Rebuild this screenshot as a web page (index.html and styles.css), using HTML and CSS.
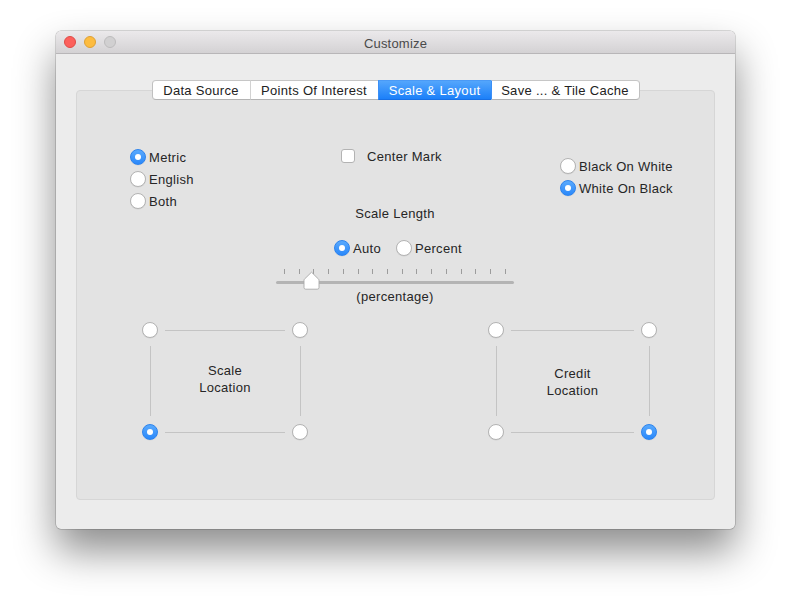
FILE: index.html
```html
<!DOCTYPE html>
<html>
<head>
<meta charset="utf-8">
<link rel="stylesheet" href="styles.css">
</head>
<body>
<div class="window">
  <div class="titlebar">
    <div class="lights">
      <span class="light red"></span>
      <span class="light yellow"></span>
      <span class="light gray"></span>
    </div>
    <div class="title">Customize</div>
  </div>
  <div class="content">
    <div class="tabs">
      <div class="tab t1">Data Source</div>
      <div class="tab t2">Points Of Interest</div>
      <div class="tab t3 active">Scale &amp; Layout</div>
      <div class="tab t4">Save ... &amp; Tile Cache</div>
    </div>
    <div class="panel">
      <div class="top">
        <div class="col1">
          <div class="opt"><span class="radio on"></span>Metric</div>
          <div class="opt"><span class="radio"></span>English</div>
          <div class="opt"><span class="radio"></span>Both</div>
        </div>
        <div class="col2">
          <div class="check-row"><span class="checkbox"></span>Center Mark</div>
          <div class="label scale-length">Scale Length</div>
          <div class="mode-row">
            <div class="opt"><span class="radio on"></span>Auto</div>
            <div class="opt"><span class="radio"></span>Percent</div>
          </div>
          <div class="slider">
            <div class="ticks">
              <i></i><i></i><i></i><i></i><i></i><i></i><i></i><i></i>
              <i></i><i></i><i></i><i></i><i></i><i></i><i></i><i></i>
            </div>
            <div class="track"></div>
            <svg class="knob" width="17" height="19" viewBox="0 0 17 19">
              <path d="M8.5 1.2 L15.6 8.2 Q16 8.6 16 9.2 L16 16.5 Q16 18.2 14.3 18.2 L2.7 18.2 Q1 18.2 1 16.5 L1 9.2 Q1 8.6 1.4 8.2 Z" fill="#ffffff" stroke="#a9a9a9" stroke-width="0.9"/>
            </svg>
          </div>
          <div class="label pct">(percentage)</div>
        </div>
        <div class="col3">
          <div class="opt"><span class="radio"></span>Black On White</div>
          <div class="opt"><span class="radio on"></span>White On Black</div>
        </div>
      </div>
      <div class="bottom">
        <div class="loc scale-loc">
          <span class="radio"></span>
          <span class="hline"></span>
          <span class="radio"></span>
          <span class="vline"></span>
          <div class="loc-label up">Scale<br>Location</div>
          <span class="vline"></span>
          <span class="radio on"></span>
          <span class="hline"></span>
          <span class="radio"></span>
        </div>
        <div class="loc credit-loc">
          <span class="radio"></span>
          <span class="hline"></span>
          <span class="radio"></span>
          <span class="vline"></span>
          <div class="loc-label down">Credit<br>Location</div>
          <span class="vline"></span>
          <span class="radio"></span>
          <span class="hline"></span>
          <span class="radio on"></span>
        </div>
      </div>
    </div>
  </div>
</div>
</body>
</html>
```

FILE: styles.css
```css
* { box-sizing: border-box; }
html, body { margin: 0; padding: 0; }
body {
  background: #ffffff;
  width: 791px;
  height: 609px;
  padding: 31px 0 0 56px;
  font-family: "Liberation Sans", Arial, sans-serif;
  font-size: 13px;
  letter-spacing: 0.3px;
  color: #262626;
  overflow: hidden;
}
.window {
  width: 679px;
  height: 498px;
  background: #ececec;
  border-radius: 5px;
  overflow: hidden;
  box-shadow: 0 0 0 0.5px rgba(0,0,0,0.28), 0 22px 40px rgba(0,0,0,0.45);
}
.titlebar {
  height: 23px;
  background: linear-gradient(#ebe9eb, #d4d2d4);
  border-bottom: 1px solid #b8b6b8;
  display: flex;
  align-items: center;
  position: relative;
}
.lights {
  display: flex;
  gap: 8px;
  padding-left: 8px;
}
.light {
  width: 12px;
  height: 12px;
  border-radius: 50%;
  display: block;
}
.red { background: #fc605c; border: 0.5px solid #de4b46; }
.yellow { background: #fdbc40; border: 0.5px solid #dea034; }
.gray { background: #d1d0d1; border: 0.5px solid #bcbbbc; }
.title {
  position: absolute;
  left: 0; right: 0; top: 1px;
  line-height: 23px;
  text-align: center;
  color: #4a4a4a;
  font-size: 13px;
  letter-spacing: 0.2px;
}
.content {
  padding: 26px 20px 0 20px;
}
.tabs {
  display: flex;
  justify-content: center;
  position: relative;
  z-index: 2;
  height: 20px;
}
.tab {
  height: 20px;
  line-height: 19px;
  text-align: center;
  background: #ffffff;
  border-top: 1px solid #c6c6c6;
  border-bottom: 1px solid #b4b4b4;
  border-left: 1px solid #d2d2d2;
  color: #222;
  font-size: 13px;
  white-space: nowrap;
}
.t1 { width: 98px; border-left: 1px solid #c0c0c0; border-radius: 4px 0 0 4px; }
.t2 { width: 128px; }
.t3 { width: 113px; }
.t4 { width: 149px; border-right: 1px solid #c0c0c0; border-radius: 0 4px 4px 0; }
.tab.active {
  background: linear-gradient(#54a6fc, #1c80f9);
  color: #ffffff;
  border-top-color: #4a9af6;
  border-bottom-color: #1770e6;
  border-left-color: #3b8ff7;
}
.t4 { border-left-color: #3b8ff7; }
.panel {
  margin-top: -10px;
  height: 410px;
  background: #e3e3e3;
  border: 1px solid #d6d6d6;
  border-radius: 4px;
  padding-top: 55px;
}
.top {
  display: flex;
  align-items: flex-start;
  padding-left: 53px;
}
.col1 { width: 145px; }
.opt {
  display: flex;
  align-items: center;
  height: 22px;
  white-space: nowrap;
}
.radio {
  width: 16px;
  height: 16px;
  border-radius: 50%;
  background: #ffffff;
  border: 1px solid #b3b3b3;
  box-shadow: 0 0.5px 0.5px rgba(0,0,0,0.08);
  display: inline-flex;
  align-items: center;
  justify-content: center;
  flex: none;
  margin-right: 3px;
}
.radio.on {
  background: linear-gradient(#5aaafd, #2a88fa);
  border-color: #2c83ee;
}
.radio.on::after {
  content: "";
  width: 6px;
  height: 6px;
  border-radius: 50%;
  background: #ffffff;
}
.col2 {
  width: 240px;
  display: flex;
  flex-direction: column;
  align-items: center;
}
.check-row {
  display: flex;
  align-items: center;
  height: 20px;
  align-self: flex-start;
  margin-left: 66px;
}
.checkbox {
  width: 14px;
  height: 14px;
  background: #ffffff;
  border: 1px solid #b3b3b3;
  border-radius: 3px;
  margin-right: 12px;
}
.label { height: 16px; line-height: 16px; }
.scale-length { margin-top: 40px; }
.mode-row {
  display: flex;
  gap: 15px;
  margin-top: 15px;
  height: 22px;
  align-items: center;
  align-self: flex-start;
  margin-left: 59px;
}
.slider {
  position: relative;
  width: 238px;
  height: 21px;
  margin-top: 10px;
}
.ticks {
  display: flex;
  justify-content: space-between;
  padding: 0 8px;
  height: 5px;
}
.ticks i {
  display: block;
  width: 1px;
  height: 5px;
  background: #9c9c9c;
}
.track {
  margin-top: 7px;
  height: 3px;
  border-radius: 2px;
  background: #b4b4b4;
}
.knob {
  position: absolute;
  left: 27px;
  top: 2px;
}
.pct { margin-top: -1px; }
.col3 {
  margin-left: 45px;
  padding-top: 9px;
}
.bottom {
  display: flex;
  justify-content: space-between;
  padding: 0 57px 0 65px;
  margin-top: 17px;
}
.loc {
  display: grid;
  grid-template-columns: 16px 1fr 16px;
  grid-template-rows: 16px 1fr 16px;
  height: 118px;
  align-items: center;
  justify-items: center;
}
.loc .radio { margin: 0; }
.scale-loc { width: 166px; }
.credit-loc { width: 169px; }
.hline {
  display: block;
  height: 1px;
  background: #c4c4c4;
  width: calc(100% - 14px);
}
.vline {
  display: block;
  width: 1px;
  background: #c4c4c4;
  height: calc(100% - 16px);
  align-self: center;
}
.loc-label {
  text-align: center;
  line-height: 17px;
}
.loc-label.up { margin-top: -5px; }
.loc-label.down { margin-top: 2px; }
```
